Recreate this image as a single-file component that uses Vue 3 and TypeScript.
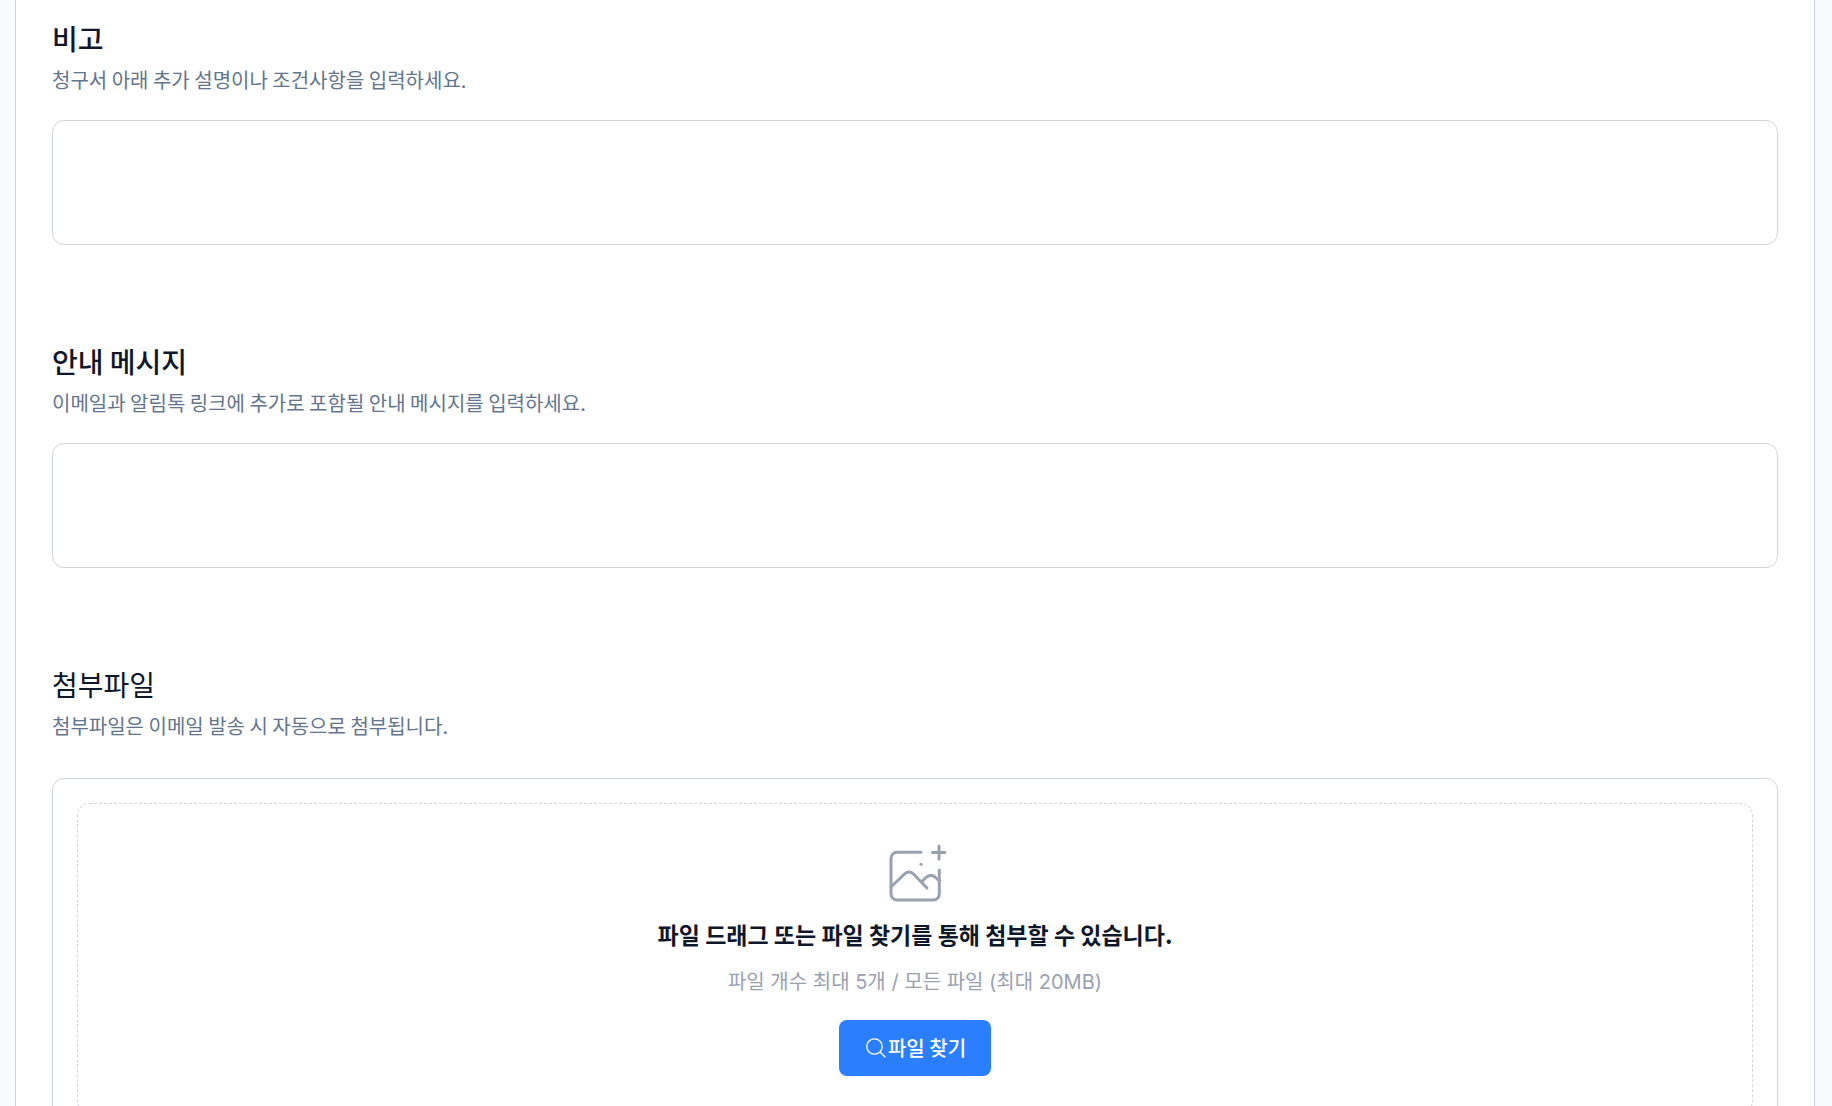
<script setup lang="ts">
import { ref } from 'vue'

interface NoteField {
  id: string
  title: string
  hint: string
}

const fields: NoteField[] = [
  { id: 'remarks', title: '비고', hint: '청구서 아래 추가 설명이나 조건사항을 입력하세요.' },
  { id: 'message', title: '안내 메시지', hint: '이메일과 알림톡 링크에 추가로 포함될 안내 메시지를 입력하세요.' },
]

const values = ref<Record<string, string>>({ remarks: '', message: '' })
</script>

<template>
  <div class="page">
    <main class="panel">
      <section v-for="field in fields" :key="field.id" class="section">
        <h2 class="title">
          <label :for="field.id">{{ field.title }}</label>
        </h2>
        <p :id="field.id + '-hint'" class="hint">{{ field.hint }}</p>
        <textarea
          :id="field.id"
          v-model="values[field.id]"
          class="box note"
          :aria-describedby="field.id + '-hint'"
        ></textarea>
      </section>

      <section class="section">
        <h2 class="title light">첨부파일</h2>
        <p class="hint">첨부파일은 이메일 발송 시 자동으로 첨부됩니다.</p>
        <div class="box upload">
          <div class="dropzone">
            <svg class="picture" viewBox="0 0 64 64" aria-hidden="true">
              <path d="M38 12.300H14a6 6 0 0 0-6 6V54a6 6 0 0 0 6 6h36.300a6 6 0 0 0 6-6V30" />
              <path d="M56 6v13M49.500 12.500h12.500" />
              <path d="M8 47L21.500 34Q26 30 30.500 34L44 48" />
              <path d="M38.500 42L43 37.500Q47.500 33.500 52 37L56.300 41" />
              <path d="M38 24.300h.01" />
            </svg>
            <p class="lead">파일 드래그 또는 파일 찾기를 통해 첨부할 수 있습니다.</p>
            <p class="limits">파일 개수 최대 5개 / 모든 파일 (최대 20MB)</p>
            <button type="button" class="browse">
              <svg viewBox="0 0 20 20" aria-hidden="true">
                <circle cx="8.500" cy="8.500" r="7.700" />
                <path d="M14 14l5.300 5.300" />
              </svg>
              <span>파일 찾기</span>
            </button>
          </div>
        </div>
      </section>
    </main>
  </div>
</template>

<style>
body {
  background: #f8fafc;
}
</style>

<style scoped>
.page {
  height: 100vh;
  overflow: hidden;
  box-sizing: border-box;
  padding: 0 17px 0 15px;
  background: #f8fafc;
  color: #0f172b;
  font-family: 'Noto Sans CJK KR', sans-serif;
}
.panel {
  display: flex;
  flex-direction: column;
  gap: 96px;
  padding: 18px 36px 36px;
  border: solid #cfd4dc;
  border-width: 0 1px;
  background: #fff;
}
.section {
  display: flex;
  flex-direction: column;
}
.title,
.hint,
.lead,
.limits {
  margin: 0;
}
.title {
  font-size: 28px;
  line-height: 40px;
  font-weight: 500;
}
.title.light {
  font-weight: 400;
}
.hint {
  margin-top: 8px;
  font-size: 20px;
  line-height: 28px;
  color: #62748e;
}
.box {
  box-sizing: border-box;
  width: 100%;
  border: 1px solid #d1d5dc;
  border-radius: 12px;
  background: #fff;
}
.note {
  display: block;
  height: 125px;
  margin: 26px 0 0;
  padding: 16px;
  font: inherit;
  font-size: 20px;
  color: inherit;
  resize: none;
}
.upload {
  margin-top: 38px;
  padding: 24px;
}
.dropzone {
  display: flex;
  flex-direction: column;
  align-items: center;
  padding: 36px;
  border: 1px dashed #d1d5dc;
  border-radius: 12px;
}
.picture {
  width: 64px;
  height: 64px;
  fill: none;
  stroke: #99a1af;
  stroke-width: 3;
  stroke-linecap: round;
  stroke-linejoin: round;
}
.lead {
  margin-top: 14px;
  font-size: 23px;
  line-height: 32px;
  font-weight: 700;
}
.limits {
  margin-top: 18px;
  font-family: Inter, 'Noto Sans CJK KR', sans-serif;
  font-size: 20px;
  line-height: 28px;
  color: #99a1af;
}
.browse {
  display: flex;
  align-items: center;
  gap: 2px;
  height: 56px;
  margin-top: 24px;
  padding: 0 25px 1px 27px;
  border: 0;
  border-radius: 8px;
  background: #2b7fff;
  color: #fff;
  font: inherit;
  font-size: 20px;
  font-weight: 500;
  cursor: pointer;
}
.browse svg {
  width: 20px;
  height: 20px;
  fill: none;
  stroke: currentColor;
  stroke-width: 1.300;
}
</style>
